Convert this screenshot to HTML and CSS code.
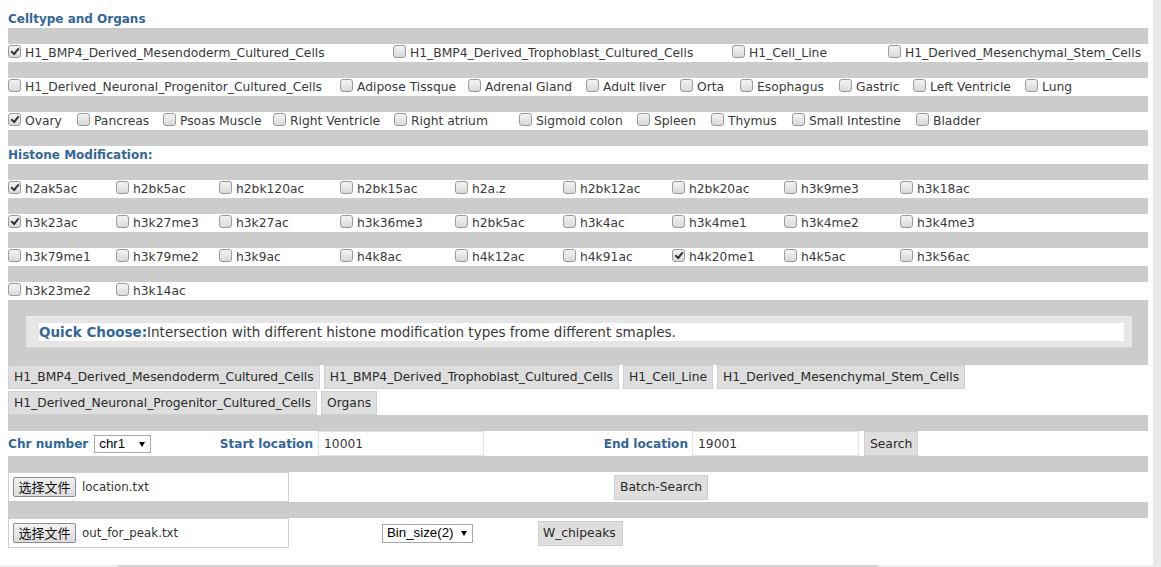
FILE: index.html
```
<!DOCTYPE html>
<html>
<head>
<meta charset="utf-8">
<title>Histone search</title>
<link rel="stylesheet" href="styles.css">
</head>
<body>
<div class="page">
  <div class="title first">Celltype and Organs</div>
  <div class="sep"></div>
  <div class="cbrow cells">
    <label class="item"><input type="checkbox" checked>H1_BMP4_Derived_Mesendoderm_Cultured_Cells</label>
    <label class="item"><input type="checkbox">H1_BMP4_Derived_Trophoblast_Cultured_Cells</label>
    <label class="item"><input type="checkbox">H1_Cell_Line</label>
    <label class="item"><input type="checkbox">H1_Derived_Mesenchymal_Stem_Cells</label>
  </div>
  <div class="sep"></div>
  <div class="cbrow organs1">
    <label class="item"><input type="checkbox">H1_Derived_Neuronal_Progenitor_Cultured_Cells</label>
    <label class="item"><input type="checkbox">Adipose Tissque</label>
    <label class="item"><input type="checkbox">Adrenal Gland</label>
    <label class="item"><input type="checkbox">Adult liver</label>
    <label class="item"><input type="checkbox">Orta</label>
    <label class="item"><input type="checkbox">Esophagus</label>
    <label class="item"><input type="checkbox">Gastric</label>
    <label class="item"><input type="checkbox">Left Ventricle</label>
    <label class="item"><input type="checkbox">Lung</label>
  </div>
  <div class="sep"></div>
  <div class="cbrow organs2">
    <label class="item"><input type="checkbox" checked>Ovary</label>
    <label class="item"><input type="checkbox">Pancreas</label>
    <label class="item"><input type="checkbox">Psoas Muscle</label>
    <label class="item"><input type="checkbox">Right Ventricle</label>
    <label class="item"><input type="checkbox">Right atrium</label>
    <label class="item"><input type="checkbox">Sigmoid colon</label>
    <label class="item"><input type="checkbox">Spleen</label>
    <label class="item"><input type="checkbox">Thymus</label>
    <label class="item"><input type="checkbox">Small Intestine</label>
    <label class="item"><input type="checkbox">Bladder</label>
  </div>
  <div class="sep"></div>

  <div class="title">Histone Modification:</div>
  <div class="sep"></div>
  <div class="cbrow hist">
    <label class="item"><input type="checkbox" checked>h2ak5ac</label>
    <label class="item"><input type="checkbox">h2bk5ac</label>
    <label class="item"><input type="checkbox">h2bk120ac</label>
    <label class="item"><input type="checkbox">h2bk15ac</label>
    <label class="item"><input type="checkbox">h2a.z</label>
    <label class="item"><input type="checkbox">h2bk12ac</label>
    <label class="item"><input type="checkbox">h2bk20ac</label>
    <label class="item"><input type="checkbox">h3k9me3</label>
    <label class="item"><input type="checkbox">h3k18ac</label>
  </div>
  <div class="sep"></div>
  <div class="cbrow hist">
    <label class="item"><input type="checkbox" checked>h3k23ac</label>
    <label class="item"><input type="checkbox">h3k27me3</label>
    <label class="item"><input type="checkbox">h3k27ac</label>
    <label class="item"><input type="checkbox">h3k36me3</label>
    <label class="item"><input type="checkbox">h2bk5ac</label>
    <label class="item"><input type="checkbox">h3k4ac</label>
    <label class="item"><input type="checkbox">h3k4me1</label>
    <label class="item"><input type="checkbox">h3k4me2</label>
    <label class="item"><input type="checkbox">h3k4me3</label>
  </div>
  <div class="sep"></div>
  <div class="cbrow hist">
    <label class="item"><input type="checkbox">h3k79me1</label>
    <label class="item"><input type="checkbox">h3k79me2</label>
    <label class="item"><input type="checkbox">h3k9ac</label>
    <label class="item"><input type="checkbox">h4k8ac</label>
    <label class="item"><input type="checkbox">h4k12ac</label>
    <label class="item"><input type="checkbox">h4k91ac</label>
    <label class="item"><input type="checkbox" checked>h4k20me1</label>
    <label class="item"><input type="checkbox">h4k5ac</label>
    <label class="item"><input type="checkbox">h3k56ac</label>
  </div>
  <div class="sep"></div>
  <div class="cbrow hist">
    <label class="item"><input type="checkbox">h3k23me2</label>
    <label class="item"><input type="checkbox">h3k14ac</label>
  </div>

  <div class="quick-area">
    <div class="quick">
      <p><b class="qlab">Quick Choose:</b>Intersection with different histone modification types frome different smaples.</p>
    </div>
  </div>

  <div class="qbtns">
    <button class="btn qbtn">H1_BMP4_Derived_Mesendoderm_Cultured_Cells</button>
    <button class="btn qbtn">H1_BMP4_Derived_Trophoblast_Cultured_Cells</button>
    <button class="btn qbtn">H1_Cell_Line</button>
    <button class="btn qbtn">H1_Derived_Mesenchymal_Stem_Cells</button>
    <button class="btn qbtn">H1_Derived_Neuronal_Progenitor_Cultured_Cells</button>
    <button class="btn qbtn">Organs</button>
  </div>
  <div class="sep"></div>

  <div class="chr-row">
    <div class="chr-cell">
      <span class="lab">Chr number</span>
      <span class="sel-wrap"><select class="sel chr"><option>chr1</option></select></span>
    </div>
    <span class="lab start-lab">Start location</span>
    <input class="txt start" type="text" value="10001">
    <span class="lab end-lab">End location</span>
    <input class="txt end" type="text" value="19001">
    <button class="btn search">Search</button>
  </div>
  <div class="sep"></div>

  <div class="file-row">
    <div class="file"><button class="file-btn">选择文件</button><span class="fname">location.txt</span></div>
    <button class="btn batch">Batch-Search</button>
  </div>
  <div class="sep"></div>
  <div class="file-row">
    <div class="file"><button class="file-btn">选择文件</button><span class="fname">out_for_peak.txt</span></div>
    <span class="sel-wrap bin-wrap"><select class="sel bin"><option>Bin_size(2)</option></select></span>
    <button class="btn wchip">W_chipeaks</button>
  </div>
</div>
<div class="vscroll"></div>
<div class="hscroll"><div class="hthumb"></div></div>
</body>
</html>
```
FILE: styles.css
```
html, body {
  margin: 0;
  padding: 0;
  background: #fff;
}
.page {
  width: 1140px;
  margin-left: 8px;
  font-family: "DejaVu Sans", Verdana, sans-serif;
  font-size: 12.3px;
  color: #3a3a3a;
}
.title {
  color: #336699;
  font-weight: bold;
  font-size: 12px;
  line-height: 18px;
}
.title.first {
  padding-top: 10px;
}
.lab {
  color: #336699;
  font-weight: bold;
  font-size: 12.1px;
}
.qlab {
  color: #336699;
  font-weight: bold;
}
.sep {
  height: 16px;
  background: #cccccc;
}
.cbrow {
  display: grid;
  height: 18px;
  line-height: 18px;
  white-space: nowrap;
  background: #fff;
}
.cbrow.cells {
  grid-template-columns: 385px 339px 156px auto;
}
.cbrow.organs1 {
  grid-template-columns: 332px 128px 118px 94px 60px 99px 74px 112px auto;
}
.cbrow.organs2 {
  grid-template-columns: 69px 86px 110px 121px 125px 118px 74px 81px 124px auto;
}
.cbrow.hist {
  grid-template-columns: 108px 103px 121px 115px 108px 109px 112px 116px auto;
}
.item {
  display: flex;
  align-items: flex-start;
}
.item input {
  -webkit-appearance: none;
  appearance: none;
  position: relative;
  flex: none;
  width: 13px;
  height: 13px;
  margin: 1px 4px 0 0;
  border: 1px solid #9a9a9a;
  border-radius: 3px;
  background: linear-gradient(#f4f4f4, #d9d9d9);
}
.item input:checked::after {
  content: "";
  position: absolute;
  left: 2px;
  top: 2px;
  width: 6px;
  height: 3px;
  border-left: 2px solid #333;
  border-bottom: 2px solid #333;
  transform: rotate(-50deg);
}

.quick-area {
  background: #cccccc;
  padding: 16px 16px 17px 18px;
}
.quick {
  background: #e6e6e6;
  border-top: 1px solid #efefef;
  border-bottom: 1px solid #d4d4d4;
  padding: 6px 8px 6px 13px;
}
.quick p {
  margin: 0;
  background: #fff;
  line-height: 18px;
  font-size: 13.5px;
  white-space: nowrap;
}

.btn {
  font-family: "DejaVu Sans", Verdana, sans-serif;
  font-size: 12.3px;
  color: #2a2a2a;
  background: #dedede;
  border: 1px solid #d0d0d0;
  padding: 0 5px;
  margin: 0;
  height: 24px;
  white-space: nowrap;
}
.qbtns {
  display: flex;
  flex-wrap: wrap;
  gap: 2px 4px;
  background: #fff;
}

.chr-row {
  display: flex;
  align-items: center;
  height: 25px;
  background: #fff;
}
.chr-cell {
  width: 210px;
  display: flex;
  align-items: center;
  gap: 6px;
}
.start-lab {
  width: 95px;
  text-align: right;
}
.end-lab {
  width: 204px;
  text-align: right;
}
.txt {
  box-sizing: border-box;
  height: 25px;
  margin: 0;
  border: 1px solid #e2e2e2;
  padding: 0 5px;
  font-family: "DejaVu Sans", Verdana, sans-serif;
  font-size: 12.3px;
  color: #333;
  background: #fff;
}
.txt.start {
  width: 166px;
  margin-left: 5px;
}
.txt.end {
  width: 167px;
  margin-left: 4px;
}
.search {
  margin-left: 5px;
  width: 54px;
  height: 25px;
  padding: 0 5px;
  text-align: left;
}

.sel-wrap {
  position: relative;
  display: inline-flex;
}
.sel-wrap::after {
  content: "";
  position: absolute;
  right: 6px;
  top: 7px;
  border-left: 3px solid transparent;
  border-right: 3px solid transparent;
  border-top: 5px solid #000;
  pointer-events: none;
}
.sel {
  -webkit-appearance: none;
  appearance: none;
  box-sizing: border-box;
  margin: 0;
  height: 18px;
  padding: 0 0 0 4px;
  border: 1px solid #a9a9a9;
  background: #fff;
  font-family: "Liberation Sans", Arial, sans-serif;
  font-size: 13.3px;
  line-height: 16px;
  color: #000;
}
.sel.chr {
  width: 57px;
}
.sel.bin {
  width: 91px;
  height: 19px;
}

.file-row {
  display: flex;
  align-items: center;
  height: 30px;
  background: #fff;
}
.file {
  box-sizing: border-box;
  width: 281px;
  height: 30px;
  border: 1px solid #cfcfcf;
  padding: 0 4px;
  display: flex;
  align-items: center;
  gap: 6px;
}
.file-btn {
  box-sizing: border-box;
  height: 20px;
  width: 63px;
  margin: 0;
  padding: 0;
  border: 1px solid #8d8d8d;
  border-radius: 2px;
  background: linear-gradient(#f2f2f2, #dcdcdc);
  font-family: "Noto Sans CJK SC", sans-serif;
  font-size: 13px;
  line-height: 18px;
  color: #111;
}
.fname {
  font-size: 11.8px;
  color: #333;
}
.batch {
  margin-left: 325px;
  height: 25px;
  width: 94px;
  padding: 0 0 0 5px;
  text-align: left;
}
.bin-wrap {
  margin-left: 93px;
}
.wchip {
  margin-left: 65px;
  height: 25px;
  width: 85px;
  padding: 0 4px;
  text-align: left;
}

.vscroll {
  position: fixed;
  top: 0;
  right: 0;
  bottom: 0;
  width: 8px;
  background: #e9e9e9;
}
.hscroll {
  position: fixed;
  left: 0;
  right: 8px;
  bottom: 0;
  height: 2px;
  background: #ededed;
}
.hthumb {
  position: absolute;
  left: 118px;
  width: 760px;
  top: 0;
  bottom: 0;
  background: #d0d0d0;
}
```
